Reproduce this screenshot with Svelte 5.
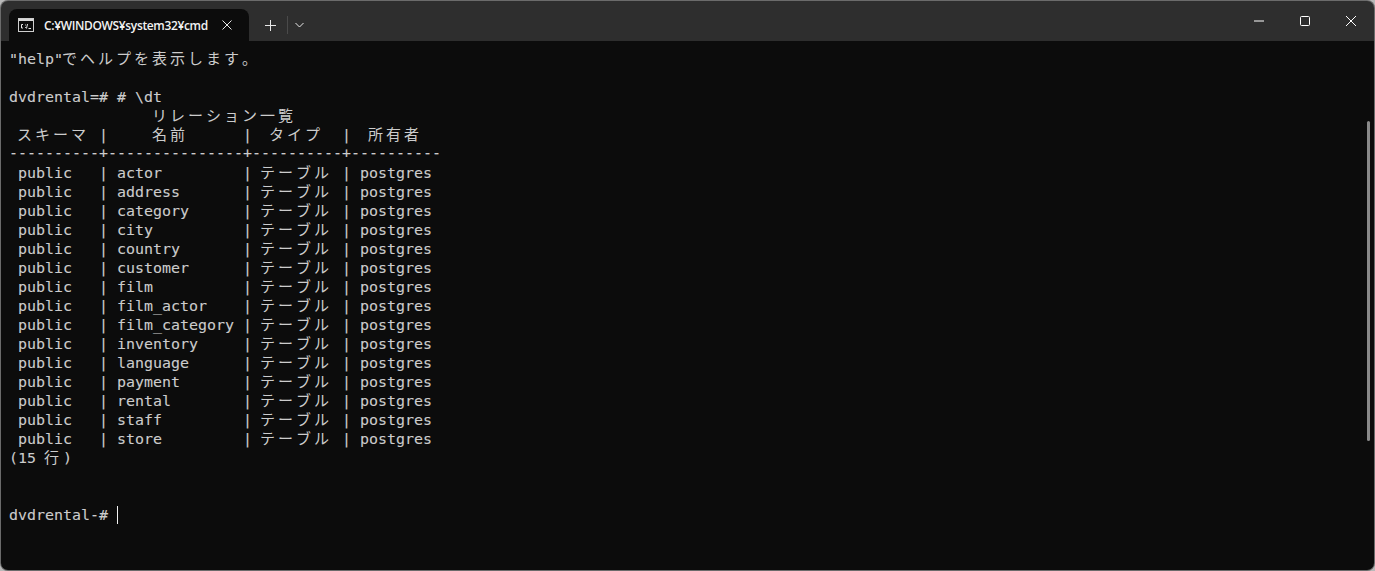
<script>
  const tables = [
    'actor', 'address', 'category', 'city', 'country', 'customer', 'film', 'film_actor',
    'film_category', 'inventory', 'language', 'payment', 'rental', 'staff', 'store',
  ];

  const rule = '----------+---------------+----------+----------';

  const lines = [
    '"help"でヘルプを表示します。',
    '',
    'dvdrental=# # \\dt',
    '                リレーション一覧',
    ' スキーマ |     名前      |  タイプ  |  所有者',
    rule,
    ...tables.map((t) => ` public   | ${t.padEnd(13)} | テーブル | postgres`),
    '(15 行)',
    '',
    '',
    'dvdrental-# ',
  ];

  // terminal grid: CJK glyphs take two cells
  const isWide = (ch) => ch.charCodeAt(0) > 0x2e80;
</script>

<div class="window">
  <header class="titlebar">
    <div class="tab">
      <svg class="tab-icon" width="16" height="14" viewBox="0 0 16 14">
        <rect x="0.5" y="0.5" width="15" height="13" fill="#0c0c0c" stroke="#cfcfcf" />
        <rect x="1" y="1" width="14" height="2" fill="#d8d8d8" />
        <path d="M5 6.5H3.5V10H5M7 7h.8M7 9.5h.8M9.5 6l-1 4.5M10.5 10.5H13" fill="none" stroke="#e6e6e6" />
      </svg>
      <span class="tab-title">C:¥WINDOWS¥system32¥cmd</span>
      <svg class="tab-close" width="10" height="10" viewBox="0 0 10 10">
        <path d="M0.5 0.5l9 9M9.5 0.5l-9 9" stroke="#e8e8e8" fill="none" />
      </svg>
    </div>
    <div class="new-tab">
      <svg width="11" height="11" viewBox="0 0 11 11">
        <path d="M5.5 0v11M0 5.5h11" stroke="#e8e8e8" fill="none" />
      </svg>
    </div>
    <div class="divider"></div>
    <div class="dropdown">
      <svg width="9" height="6" viewBox="0 0 9 6">
        <path d="M0.5 1l4 4 4-4" stroke="#e8e8e8" fill="none" />
      </svg>
    </div>
    <div class="spacer"></div>
    <div class="controls">
      <div class="control">
        <svg width="10" height="2" viewBox="0 0 10 2"><path d="M0 1h10" stroke="#fff" fill="none" /></svg>
      </div>
      <div class="control">
        <svg width="10" height="10" viewBox="0 0 10 10"><rect x="0.5" y="0.5" width="9" height="9" rx="1" stroke="#fff" fill="none" /></svg>
      </div>
      <div class="control">
        <svg width="10" height="10" viewBox="0 0 10 10"><path d="M0 0l10 10M10 0L0 10" stroke="#fff" fill="none" /></svg>
      </div>
    </div>
  </header>

  <main class="terminal">
    {#each lines as line, i}
      <div class="line" class:rule={line === rule}>
        {#each Array.from(line) as ch}
          <span class="cell" class:wide={isWide(ch)}>{ch}</span>
        {/each}
        {#if i === lines.length - 1}
          <span class="cursor"></span>
        {/if}
      </div>
    {/each}
    <div class="scrollbar"></div>
  </main>
</div>

<style>
  :global(body) {
    background: #b9b9b9;
    overflow: hidden;
  }

  .window {
    width: 1375px;
    height: 571px;
    box-sizing: border-box;
    padding: 1px;
    border-radius: 8px;
    overflow: hidden;
    display: flex;
    flex-direction: column;
    background: #6b6b6b;
  }

  .titlebar {
    height: 40px;
    flex: none;
    display: flex;
    align-items: flex-end;
    background: #2e2e2e;
    border-radius: 7px 7px 0 0;
    padding-left: 8px;
  }

  .tab {
    width: 240px;
    height: 32px;
    box-sizing: border-box;
    display: flex;
    align-items: center;
    padding-left: 9px;
    background: #0c0c0c;
    border-radius: 8px 8px 0 0;
  }

  .tab-icon {
    flex: none;
  }

  .tab-title {
    margin-left: 10px;
    width: 165px;
    flex: none;
    font-family: "Open Sans", "Noto Sans CJK JP", sans-serif;
    font-size: 12px;
    font-weight: 600;
    letter-spacing: -0.35px;
    color: #f2f2f2;
    white-space: nowrap;
  }

  .tab-close {
    margin-left: 13px;
    flex: none;
  }

  .new-tab {
    width: 38px;
    height: 32px;
    box-sizing: border-box;
    padding-left: 5px;
    display: flex;
    align-items: center;
    justify-content: center;
  }

  .divider {
    width: 1px;
    height: 18px;
    margin-bottom: 7px;
    background: #4a4a4a;
  }

  .dropdown {
    width: 23px;
    height: 32px;
    display: flex;
    align-items: center;
    justify-content: center;
  }

  .spacer {
    flex: 1;
  }

  .controls {
    display: flex;
    align-self: flex-start;
  }

  .control {
    width: 46px;
    height: 40px;
    display: flex;
    align-items: center;
    justify-content: center;
  }

  .terminal {
    position: relative;
    flex: 1;
    min-height: 0;
    box-sizing: border-box;
    padding: 8px 0 0 8px;
    background: #0c0c0c;
    border-radius: 0 0 7px 7px;
    color: #cccccc;
    font-family: "DejaVu Sans Mono", "Noto Sans CJK JP", monospace;
    font-size: 14.95px;
    line-height: 19px;
    -webkit-text-stroke: 0.1px #cccccc;
  }

  .line {
    display: flex;
    height: 19px;
    white-space: pre;
  }

  .cell {
    flex: none;
    width: 9px;
    display: block;
    position: relative;
    top: 1px;
  }

  .cell.wide {
    width: 18px;
    top: -1px;
    left: -1px;
    font-family: "Noto Sans CJK JP", sans-serif;
    font-size: 15px;
    -webkit-text-stroke: 0;
  }

  .rule .cell {
    top: 0;
  }

  .cursor {
    width: 1px;
    height: 18px;
    margin-top: 1px;
    background: #f2f2f2;
  }

  .scrollbar {
    position: absolute;
    top: 80px;
    right: 4px;
    width: 3px;
    height: 320px;
    background: #8a8a8a;
    border-radius: 2px;
  }
</style>
